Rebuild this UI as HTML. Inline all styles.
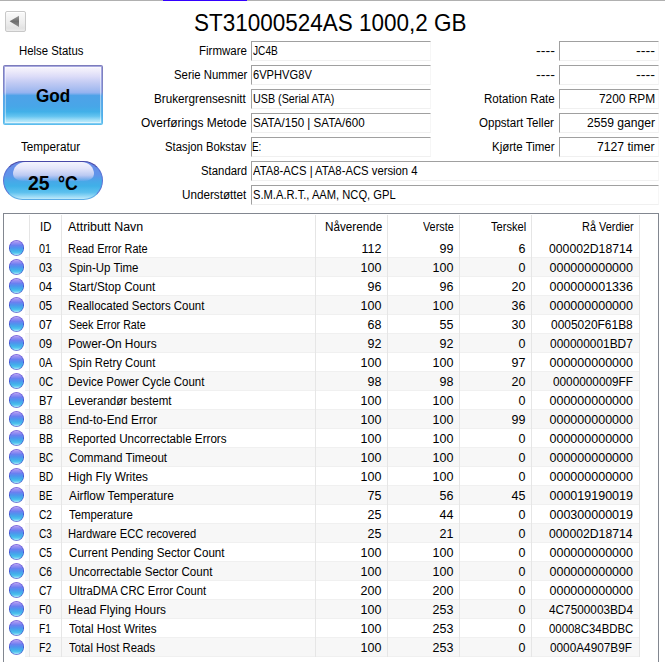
<!DOCTYPE html>
<html><head><meta charset="utf-8"><style>
*{margin:0;padding:0;box-sizing:border-box}
html,body{width:665px;height:662px;overflow:hidden;background:#fff}
body{position:relative;font-family:"Liberation Sans",sans-serif;font-size:12.5px;color:#000}
.t{position:absolute;white-space:nowrap;line-height:20px;transform-origin:0 0}
.a{position:absolute}
.box{position:absolute;height:20px;border-top:1px solid #a0a0a0;border-left:1px solid #a0a0a0;border-right:1px solid #f6f6f6;border-bottom:1px solid #f0f0f0;background:#fff}
.dot{position:absolute;width:15px;height:15.5px;border-radius:50%;box-shadow:inset 0 0 0.5px 0.7px rgba(60,40,190,.6);
 background:radial-gradient(ellipse at 50% 45%,rgba(50,30,190,0) 60%,rgba(50,30,190,.75) 100%),linear-gradient(#c8b4f6 0%,#9c90f2 16%,#6a80f0 34%,#4e94ee 50%,#42b0ea 68%,#50c4ee 80%,#a4e2f8 93%,#c0eefa 100%);}
</style></head><body>

<div class="a" style="left:0;top:0;width:665px;height:1px;background:#b0b0b0"></div>
<div class="a" style="left:163px;top:0;width:84px;height:1px;background:#3300ff"></div>
<div class="a" style="left:5px;top:11px;width:21px;height:21px;border:1px solid #c8c8c8;border-radius:2px;background:linear-gradient(#fafafa,#ececec 60%,#e2e2e2 85%,#ececec);box-shadow:inset 0 1px 0 #fff"></div>
<svg class="a" style="left:0;top:0" width="30" height="35"><defs><linearGradient id="tg" x1="0" y1="15.8" x2="0" y2="27" gradientUnits="userSpaceOnUse"><stop offset="0" stop-color="#9a9a9a"/><stop offset=".5" stop-color="#6e6e6e"/><stop offset="1" stop-color="#8e8e8e"/></linearGradient></defs><polygon points="9.6,21.3 19,15.8 19,27" fill="url(#tg)"/></svg>
<div class="a" style="left:3px;top:65px;width:100px;height:60px;border-radius:2px;background:linear-gradient(#7c7cbc 0%,#8088c8 44%,#5aa2e6 52%,#50aeea 85%,#5cbeee 100%)"><div class="a" style="left:1px;top:1px;right:1px;bottom:1px;border-radius:1px;background:linear-gradient(#a8a8de 0%,#9aa8e6 45%,#5aa6e8 52%,#5ab8ec 85%,#80ccf2 100%)"><div class="a" style="left:1px;top:1px;right:1px;bottom:1px;box-shadow:inset 0 0 0 1px rgba(255,255,255,.45);background:linear-gradient(#f6f4fc 0%,#eceafa 8%,#dcdcf8 17%,#c4ccf4 27%,#a6bcf0 40%,#94b2f0 46%,#4ea2e8 51%,#48a6e8 70%,#42b0e8 80%,#64c4f0 88%,#a4e0f8 95%,#c4ecfa 100%)"></div></div></div>
<div class="a" style="left:3px;top:161px;width:100px;height:39px;border-radius:19.5px;border:1px solid #5a72d4;border-top-color:#4848a8;border-bottom-color:#5cacE6;overflow:hidden;background:linear-gradient(#6a8ce8 0%,#6094ea 35%,#48a8e8 52%,#40b0e8 65%,#5cc0ee 82%,#a8e0f8 96%,#c0eafa 100%)"><div class="a" style="left:9px;right:8px;top:0px;height:19px;border-radius:12px 12px 10px 10px/12px 12px 7px 7px;background:linear-gradient(#f4f4fe 0%,#e2e4fa 35%,#bccaf2 70%,rgba(130,170,236,.25) 100%)"></div></div>
<div class="box" style="left:251px;top:41px;width:180px"></div>
<div class="box" style="left:559px;top:41px;width:100px"></div>
<div class="box" style="left:251px;top:65px;width:180px"></div>
<div class="box" style="left:559px;top:65px;width:100px"></div>
<div class="box" style="left:251px;top:89px;width:180px"></div>
<div class="box" style="left:559px;top:89px;width:100px"></div>
<div class="box" style="left:251px;top:113px;width:180px"></div>
<div class="box" style="left:559px;top:113px;width:100px"></div>
<div class="box" style="left:251px;top:137px;width:180px"></div>
<div class="box" style="left:559px;top:137px;width:100px"></div>
<div class="box" style="left:251px;top:161px;width:408px"></div>
<div class="box" style="left:251px;top:185px;width:408px"></div>
<div class="a" style="left:3px;top:213px;width:656px;height:460px;border:1px solid #828790;border-bottom:none;background:#fff"></div>
<div class="a" style="left:25px;top:257px;width:614px;height:20px;background:#f7f7f7;border-top:1px solid #f0f0f0;border-bottom:1px solid #f0f0f0"></div>
<div class="a" style="left:25px;top:295px;width:614px;height:20px;background:#f7f7f7;border-top:1px solid #f0f0f0;border-bottom:1px solid #f0f0f0"></div>
<div class="a" style="left:25px;top:333px;width:614px;height:20px;background:#f7f7f7;border-top:1px solid #f0f0f0;border-bottom:1px solid #f0f0f0"></div>
<div class="a" style="left:25px;top:371px;width:614px;height:20px;background:#f7f7f7;border-top:1px solid #f0f0f0;border-bottom:1px solid #f0f0f0"></div>
<div class="a" style="left:25px;top:409px;width:614px;height:20px;background:#f7f7f7;border-top:1px solid #f0f0f0;border-bottom:1px solid #f0f0f0"></div>
<div class="a" style="left:25px;top:447px;width:614px;height:20px;background:#f7f7f7;border-top:1px solid #f0f0f0;border-bottom:1px solid #f0f0f0"></div>
<div class="a" style="left:25px;top:485px;width:614px;height:20px;background:#f7f7f7;border-top:1px solid #f0f0f0;border-bottom:1px solid #f0f0f0"></div>
<div class="a" style="left:25px;top:523px;width:614px;height:20px;background:#f7f7f7;border-top:1px solid #f0f0f0;border-bottom:1px solid #f0f0f0"></div>
<div class="a" style="left:25px;top:561px;width:614px;height:20px;background:#f7f7f7;border-top:1px solid #f0f0f0;border-bottom:1px solid #f0f0f0"></div>
<div class="a" style="left:25px;top:599px;width:614px;height:20px;background:#f7f7f7;border-top:1px solid #f0f0f0;border-bottom:1px solid #f0f0f0"></div>
<div class="a" style="left:25px;top:637px;width:614px;height:20px;background:#f7f7f7;border-top:1px solid #f0f0f0;border-bottom:1px solid #f0f0f0"></div>
<div class="a" style="left:29px;top:215px;width:1px;height:23px;background:#e5e5e5"></div>
<div class="a" style="left:29px;top:238px;width:1px;height:419px;background:#e6e6e6"></div>
<div class="a" style="left:61px;top:215px;width:1px;height:23px;background:#e5e5e5"></div>
<div class="a" style="left:61px;top:238px;width:1px;height:419px;background:#e6e6e6"></div>
<div class="a" style="left:315px;top:215px;width:1px;height:23px;background:#e5e5e5"></div>
<div class="a" style="left:315px;top:238px;width:1px;height:419px;background:#e6e6e6"></div>
<div class="a" style="left:387px;top:215px;width:1px;height:23px;background:#e5e5e5"></div>
<div class="a" style="left:387px;top:238px;width:1px;height:419px;background:#e6e6e6"></div>
<div class="a" style="left:459px;top:215px;width:1px;height:23px;background:#e5e5e5"></div>
<div class="a" style="left:459px;top:238px;width:1px;height:419px;background:#e6e6e6"></div>
<div class="a" style="left:531px;top:215px;width:1px;height:23px;background:#e5e5e5"></div>
<div class="a" style="left:531px;top:238px;width:1px;height:419px;background:#e6e6e6"></div>
<div class="a" style="left:639px;top:215px;width:1px;height:23px;background:#e5e5e5"></div>
<div class="a" style="left:639px;top:238px;width:1px;height:419px;background:#e6e6e6"></div>
<div class="dot" style="left:9.2px;top:240.1px"></div>
<div class="dot" style="left:9.2px;top:259.1px"></div>
<div class="dot" style="left:9.2px;top:278.1px"></div>
<div class="dot" style="left:9.2px;top:297.1px"></div>
<div class="dot" style="left:9.2px;top:316.1px"></div>
<div class="dot" style="left:9.2px;top:335.1px"></div>
<div class="dot" style="left:9.2px;top:354.1px"></div>
<div class="dot" style="left:9.2px;top:373.1px"></div>
<div class="dot" style="left:9.2px;top:392.1px"></div>
<div class="dot" style="left:9.2px;top:411.1px"></div>
<div class="dot" style="left:9.2px;top:430.1px"></div>
<div class="dot" style="left:9.2px;top:449.1px"></div>
<div class="dot" style="left:9.2px;top:468.1px"></div>
<div class="dot" style="left:9.2px;top:487.1px"></div>
<div class="dot" style="left:9.2px;top:506.1px"></div>
<div class="dot" style="left:9.2px;top:525.1px"></div>
<div class="dot" style="left:9.2px;top:544.1px"></div>
<div class="dot" style="left:9.2px;top:563.1px"></div>
<div class="dot" style="left:9.2px;top:582.1px"></div>
<div class="dot" style="left:9.2px;top:601.1px"></div>
<div class="dot" style="left:9.2px;top:620.1px"></div>
<div class="dot" style="left:9.2px;top:639.1px"></div>
<div class="t" style="left:194.08px;top:13px;font-size:24.5px;transform:scaleX(0.9175)">ST31000524AS 1000,2 GB</div>
<div class="t" style="left:18.79px;top:41px;transform:scaleX(0.9092)">Helse Status</div>
<div class="t" style="left:35.75px;top:86px;font-size:18px;font-weight:bold;transform:scaleX(0.9530)">God</div>
<div class="t" style="left:21.20px;top:137px;transform:scaleX(0.9357)">Temperatur</div>
<div class="t" style="left:27.90px;top:173px;font-size:20px;font-weight:bold;transform:scaleX(0.9718)">25</div>
<div class="t" style="left:57.70px;top:173px;font-size:20px;font-weight:bold;transform:scaleX(0.8819)">°C</div>
<div class="t" style="left:198.78px;top:41px;transform:scaleX(0.9212)">Firmware</div>
<div class="t" style="left:253.20px;top:41px;transform:scaleX(0.8105)">JC4B</div>
<div class="t" style="left:535.70px;top:41px;transform:scaleX(1.1342)">----</div>
<div class="t" style="left:635.80px;top:41px;transform:scaleX(1.1402)">----</div>
<div class="t" style="left:173.70px;top:65px;transform:scaleX(0.9091)">Serie Nummer</div>
<div class="t" style="left:253.20px;top:65px;transform:scaleX(0.8910)">6VPHVG8V</div>
<div class="t" style="left:535.70px;top:65px;transform:scaleX(1.1342)">----</div>
<div class="t" style="left:635.80px;top:65px;transform:scaleX(1.1402)">----</div>
<div class="t" style="left:154.46px;top:89px;transform:scaleX(0.9375)">Brukergrensesnitt</div>
<div class="t" style="left:253.20px;top:89px;transform:scaleX(0.8601)">USB (Serial ATA)</div>
<div class="t" style="left:483.57px;top:89px;transform:scaleX(0.9260)">Rotation Rate</div>
<div class="t" style="left:598.80px;top:89px;transform:scaleX(0.9515)">7200 RPM</div>
<div class="t" style="left:141.20px;top:113px;transform:scaleX(0.9556)">Overførings Metode</div>
<div class="t" style="left:253.20px;top:113px;transform:scaleX(0.9271)">SATA/150 | SATA/600</div>
<div class="t" style="left:479.40px;top:113px;transform:scaleX(0.9246)">Oppstart Teller</div>
<div class="t" style="left:586.80px;top:113px;transform:scaleX(0.9680)">2559 ganger</div>
<div class="t" style="left:165.00px;top:137px;transform:scaleX(0.9051)">Stasjon Bokstav</div>
<div class="t" style="left:252.41px;top:137px;transform:scaleX(0.7932)">E:</div>
<div class="t" style="left:491.78px;top:137px;transform:scaleX(0.9192)">Kjørte Timer</div>
<div class="t" style="left:597.30px;top:137px;transform:scaleX(0.9729)">7127 timer</div>
<div class="t" style="left:200.60px;top:161px;transform:scaleX(0.9098)">Standard</div>
<div class="t" style="left:253.20px;top:161px;transform:scaleX(0.9028)">ATA8-ACS | ATA8-ACS version 4</div>
<div class="t" style="left:182.00px;top:185px;transform:scaleX(0.9350)">Understøttet</div>
<div class="t" style="left:253.20px;top:185px;transform:scaleX(0.8929)">S.M.A.R.T., AAM, NCQ, GPL</div>
<div class="t" style="left:39.68px;top:217px;transform:scaleX(0.9152)">ID</div>
<div class="t" style="left:68.10px;top:217px;transform:scaleX(0.9924)">Attributt Navn</div>
<div class="t" style="left:324.56px;top:217px;transform:scaleX(0.9352)">Nåverende</div>
<div class="t" style="left:423.30px;top:217px;transform:scaleX(0.8652)">Verste</div>
<div class="t" style="left:491.00px;top:217px;transform:scaleX(0.8914)">Terskel</div>
<div class="t" style="left:582.33px;top:217px;transform:scaleX(0.8740)">Rå Verdier</div>
<div class="t" style="left:39.40px;top:239px;transform:scaleX(0.8673)">01</div>
<div class="t" style="left:68.03px;top:239px;transform:scaleX(0.8750)">Read Error Rate</div>
<div class="t" style="left:361.52px;top:239px">112</div>
<div class="t" style="left:439.55px;top:239px">99</div>
<div class="t" style="left:518.50px;top:239px">6</div>
<div class="t" style="left:549.30px;top:239px;transform:scaleX(0.9773)">000002D18714</div>
<div class="t" style="left:39.20px;top:258px;transform:scaleX(0.9461)">03</div>
<div class="t" style="left:68.90px;top:258px;transform:scaleX(0.9172)">Spin-Up Time</div>
<div class="t" style="left:360.60px;top:258px">100</div>
<div class="t" style="left:432.60px;top:258px">100</div>
<div class="t" style="left:518.50px;top:258px">0</div>
<div class="t" style="left:549.53px;top:258px">000000000000</div>
<div class="t" style="left:39.20px;top:277px;transform:scaleX(0.9461)">04</div>
<div class="t" style="left:68.90px;top:277px;transform:scaleX(0.9339)">Start/Stop Count</div>
<div class="t" style="left:367.55px;top:277px">96</div>
<div class="t" style="left:439.55px;top:277px">96</div>
<div class="t" style="left:511.55px;top:277px">20</div>
<div class="t" style="left:549.53px;top:277px">000000001336</div>
<div class="t" style="left:39.20px;top:296px;transform:scaleX(0.9461)">05</div>
<div class="t" style="left:67.98px;top:296px;transform:scaleX(0.9175)">Reallocated Sectors Count</div>
<div class="t" style="left:360.60px;top:296px">100</div>
<div class="t" style="left:432.60px;top:296px">100</div>
<div class="t" style="left:511.55px;top:296px">36</div>
<div class="t" style="left:549.53px;top:296px">000000000000</div>
<div class="t" style="left:39.20px;top:315px;transform:scaleX(0.9461)">07</div>
<div class="t" style="left:68.90px;top:315px;transform:scaleX(0.8565)">Seek Error Rate</div>
<div class="t" style="left:367.55px;top:315px">68</div>
<div class="t" style="left:439.55px;top:315px">55</div>
<div class="t" style="left:511.55px;top:315px">30</div>
<div class="t" style="left:551.10px;top:315px;transform:scaleX(0.9563)">0005020F61B8</div>
<div class="t" style="left:39.20px;top:334px;transform:scaleX(0.9461)">09</div>
<div class="t" style="left:67.95px;top:334px;transform:scaleX(0.9517)">Power-On Hours</div>
<div class="t" style="left:367.55px;top:334px">92</div>
<div class="t" style="left:439.55px;top:334px">92</div>
<div class="t" style="left:518.50px;top:334px">0</div>
<div class="t" style="left:549.70px;top:334px;transform:scaleX(0.9536)">000000001BD7</div>
<div class="t" style="left:38.60px;top:353px;transform:scaleX(0.8776)">0A</div>
<div class="t" style="left:68.90px;top:353px;transform:scaleX(0.9069)">Spin Retry Count</div>
<div class="t" style="left:360.60px;top:353px">100</div>
<div class="t" style="left:432.60px;top:353px">100</div>
<div class="t" style="left:511.55px;top:353px">97</div>
<div class="t" style="left:549.53px;top:353px">000000000000</div>
<div class="t" style="left:39.00px;top:372px;transform:scaleX(0.8839)">0C</div>
<div class="t" style="left:67.98px;top:372px;transform:scaleX(0.9177)">Device Power Cycle Count</div>
<div class="t" style="left:367.55px;top:372px">98</div>
<div class="t" style="left:439.55px;top:372px">98</div>
<div class="t" style="left:511.55px;top:372px">20</div>
<div class="t" style="left:552.60px;top:372px;transform:scaleX(0.9430)">0000000009FF</div>
<div class="t" style="left:38.81px;top:391px;transform:scaleX(0.8858)">B7</div>
<div class="t" style="left:67.97px;top:391px;transform:scaleX(0.9256)">Leverandør bestemt</div>
<div class="t" style="left:360.60px;top:391px">100</div>
<div class="t" style="left:432.60px;top:391px">100</div>
<div class="t" style="left:518.50px;top:391px">0</div>
<div class="t" style="left:549.53px;top:391px">000000000000</div>
<div class="t" style="left:38.81px;top:410px;transform:scaleX(0.8858)">B8</div>
<div class="t" style="left:67.95px;top:410px;transform:scaleX(0.9451)">End-to-End Error</div>
<div class="t" style="left:360.60px;top:410px">100</div>
<div class="t" style="left:432.60px;top:410px">100</div>
<div class="t" style="left:511.55px;top:410px">99</div>
<div class="t" style="left:549.53px;top:410px">000000000000</div>
<div class="t" style="left:38.86px;top:429px;transform:scaleX(0.8411)">BB</div>
<div class="t" style="left:67.97px;top:429px;transform:scaleX(0.9316)">Reported Uncorrectable Errors</div>
<div class="t" style="left:360.60px;top:429px">100</div>
<div class="t" style="left:432.60px;top:429px">100</div>
<div class="t" style="left:518.50px;top:429px">0</div>
<div class="t" style="left:549.53px;top:429px">000000000000</div>
<div class="t" style="left:38.88px;top:448px;transform:scaleX(0.8202)">BC</div>
<div class="t" style="left:68.90px;top:448px;transform:scaleX(0.9290)">Command Timeout</div>
<div class="t" style="left:360.60px;top:448px">100</div>
<div class="t" style="left:432.60px;top:448px">100</div>
<div class="t" style="left:518.50px;top:448px">0</div>
<div class="t" style="left:549.53px;top:448px">000000000000</div>
<div class="t" style="left:38.88px;top:467px;transform:scaleX(0.8202)">BD</div>
<div class="t" style="left:67.95px;top:467px;transform:scaleX(0.9465)">High Fly Writes</div>
<div class="t" style="left:360.60px;top:467px">100</div>
<div class="t" style="left:432.60px;top:467px">100</div>
<div class="t" style="left:518.50px;top:467px">0</div>
<div class="t" style="left:549.53px;top:467px">000000000000</div>
<div class="t" style="left:38.90px;top:486px;transform:scaleX(0.7954)">BE</div>
<div class="t" style="left:68.90px;top:486px;transform:scaleX(0.9452)">Airflow Temperature</div>
<div class="t" style="left:367.55px;top:486px">75</div>
<div class="t" style="left:439.55px;top:486px">56</div>
<div class="t" style="left:511.55px;top:486px">45</div>
<div class="t" style="left:549.53px;top:486px">000019190019</div>
<div class="t" style="left:39.40px;top:505px;transform:scaleX(0.8111)">C2</div>
<div class="t" style="left:68.90px;top:505px;transform:scaleX(0.9114)">Temperature</div>
<div class="t" style="left:367.55px;top:505px">25</div>
<div class="t" style="left:439.55px;top:505px">44</div>
<div class="t" style="left:518.50px;top:505px">0</div>
<div class="t" style="left:549.53px;top:505px">000300000019</div>
<div class="t" style="left:39.40px;top:524px;transform:scaleX(0.8111)">C3</div>
<div class="t" style="left:68.00px;top:524px;transform:scaleX(0.8962)">Hardware ECC recovered</div>
<div class="t" style="left:367.55px;top:524px">25</div>
<div class="t" style="left:439.55px;top:524px">21</div>
<div class="t" style="left:518.50px;top:524px">0</div>
<div class="t" style="left:549.30px;top:524px;transform:scaleX(0.9773)">000002D18714</div>
<div class="t" style="left:39.40px;top:543px;transform:scaleX(0.8111)">C5</div>
<div class="t" style="left:68.90px;top:543px;transform:scaleX(0.9287)">Current Pending Sector Count</div>
<div class="t" style="left:360.60px;top:543px">100</div>
<div class="t" style="left:432.60px;top:543px">100</div>
<div class="t" style="left:518.50px;top:543px">0</div>
<div class="t" style="left:549.53px;top:543px">000000000000</div>
<div class="t" style="left:39.40px;top:562px;transform:scaleX(0.8111)">C6</div>
<div class="t" style="left:68.90px;top:562px;transform:scaleX(0.9304)">Uncorrectable Sector Count</div>
<div class="t" style="left:360.60px;top:562px">100</div>
<div class="t" style="left:432.60px;top:562px">100</div>
<div class="t" style="left:518.50px;top:562px">0</div>
<div class="t" style="left:549.53px;top:562px">000000000000</div>
<div class="t" style="left:39.40px;top:581px;transform:scaleX(0.8111)">C7</div>
<div class="t" style="left:68.90px;top:581px;transform:scaleX(0.9013)">UltraDMA CRC Error Count</div>
<div class="t" style="left:360.60px;top:581px">200</div>
<div class="t" style="left:432.60px;top:581px">200</div>
<div class="t" style="left:518.50px;top:581px">0</div>
<div class="t" style="left:549.53px;top:581px">000000000000</div>
<div class="t" style="left:38.83px;top:600px;transform:scaleX(0.8654)">F0</div>
<div class="t" style="left:67.95px;top:600px;transform:scaleX(0.9466)">Head Flying Hours</div>
<div class="t" style="left:360.60px;top:600px">100</div>
<div class="t" style="left:432.60px;top:600px">253</div>
<div class="t" style="left:518.50px;top:600px">0</div>
<div class="t" style="left:548.90px;top:600px;transform:scaleX(0.9437)">4C7500003BD4</div>
<div class="t" style="left:38.88px;top:619px;transform:scaleX(0.8214)">F1</div>
<div class="t" style="left:68.90px;top:619px;transform:scaleX(0.9299)">Total Host Writes</div>
<div class="t" style="left:360.60px;top:619px">100</div>
<div class="t" style="left:432.60px;top:619px">253</div>
<div class="t" style="left:518.50px;top:619px">0</div>
<div class="t" style="left:549.30px;top:619px;transform:scaleX(0.9124)">00008C34BDBC</div>
<div class="t" style="left:38.86px;top:638px;transform:scaleX(0.8361)">F2</div>
<div class="t" style="left:68.90px;top:638px;transform:scaleX(0.9059)">Total Host Reads</div>
<div class="t" style="left:360.60px;top:638px">100</div>
<div class="t" style="left:432.60px;top:638px">253</div>
<div class="t" style="left:518.50px;top:638px">0</div>
<div class="t" style="left:550.30px;top:638px;transform:scaleX(0.9434)">0000A4907B9F</div>
</body></html>
